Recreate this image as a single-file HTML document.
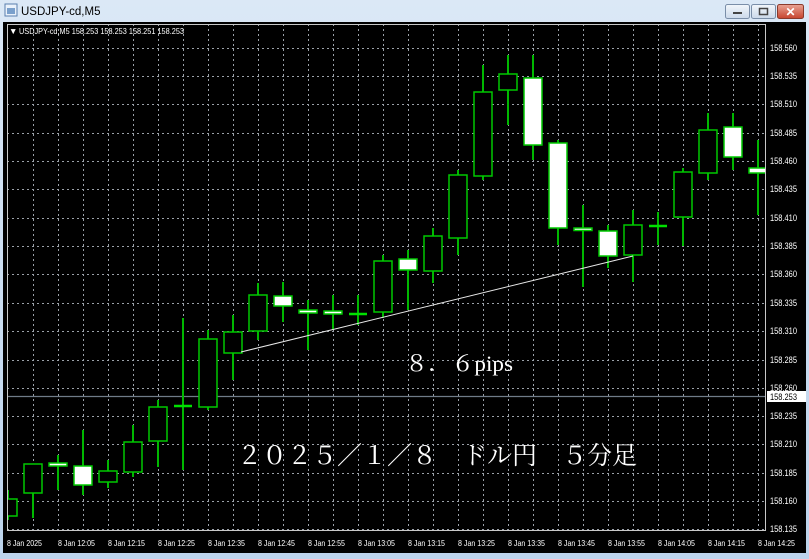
<!DOCTYPE html>
<html><head><meta charset="utf-8"><style>
html,body{margin:0;padding:0;width:809px;height:559px;overflow:hidden;background:#c4d8ee;}
svg{display:block}
</style></head><body>
<svg width="809" height="559" xmlns="http://www.w3.org/2000/svg" font-family="Liberation Sans, sans-serif">
<defs>
<linearGradient id="tb" x1="0" y1="0" x2="0" y2="1"><stop offset="0" stop-color="#dbe8f6"/><stop offset="1" stop-color="#bcd3ec"/></linearGradient>
<linearGradient id="cl" x1="0" y1="0" x2="0" y2="1"><stop offset="0" stop-color="#e9a394"/><stop offset="1" stop-color="#c7442e"/></linearGradient>
<linearGradient id="bt" x1="0" y1="0" x2="0" y2="1"><stop offset="0" stop-color="#f2f6fb"/><stop offset="1" stop-color="#cbd9ea"/></linearGradient>
<clipPath id="pc"><rect x="7" y="24" width="759" height="507"/></clipPath>
</defs>
<rect x="0" y="0" width="809" height="559" fill="url(#tb)"/>
<rect x="5" y="4" width="12" height="12" fill="#eaf2fb" stroke="#5a7fae"/>
<rect x="7" y="8" width="8" height="6" fill="#7aa0cc"/>
<text x="21" y="15" font-size="11.5" fill="#000">USDJPY-cd,M5</text>
<rect x="725.5" y="4.5" width="24" height="14" rx="2" fill="url(#bt)" stroke="#7a8ea8"/>
<rect x="733" y="12" width="9" height="2" fill="#444"/>
<rect x="751.5" y="4.5" width="24" height="14" rx="2" fill="url(#bt)" stroke="#7a8ea8"/>
<rect x="759.5" y="8.5" width="8" height="6" fill="none" stroke="#444" stroke-width="1.5"/>
<rect x="777.5" y="4.5" width="26" height="14" rx="2" fill="url(#cl)" stroke="#8a3a2c"/>
<text x="790.5" y="16" font-size="12" font-weight="bold" fill="#fff" text-anchor="middle">✕</text>
<rect x="3" y="22" width="803" height="531" fill="#000"/>
<g clip-path="url(#pc)">
<g stroke="#9aa0a8" stroke-width="1" stroke-dasharray="2,3">
<path d="M33.5 24V531M58.5 24V531M83.5 24V531M108.5 24V531M133.5 24V531M158.5 24V531M183.5 24V531M208.5 24V531M233.5 24V531M258.5 24V531M283.5 24V531M308.5 24V531M333.5 24V531M358.5 24V531M383.5 24V531M408.5 24V531M433.5 24V531M458.5 24V531M483.5 24V531M508.5 24V531M533.5 24V531M558.5 24V531M583.5 24V531M608.5 24V531M633.5 24V531M658.5 24V531M683.5 24V531M708.5 24V531M733.5 24V531M758.5 24V531"/>
<path d="M7 48.5H766M7 76.5H766M7 104.5H766M7 133.5H766M7 161.5H766M7 189.5H766M7 218.5H766M7 246.5H766M7 274.5H766M7 303.5H766M7 331.5H766M7 360.5H766M7 388.5H766M7 416.5H766M7 444.5H766M7 473.5H766M7 501.5H766M7 529.5H766"/>
</g>
<line x1="7" y1="396.5" x2="766" y2="396.5" stroke="#6f7b88" stroke-width="1.3"/>
<g stroke="#00b800" stroke-width="2">
<path d="M8 490V520M33 464V518M58 455V490M83 430V495M108 460V488M133 425V477M158 400V467M183 318V470M208 330V410M233 315V380M258 283V340M283 282V322M308 300V350M333 295V330M358 295V325M383 255V318M408 250V310M433 228V283M458 170V255M483 65V180M508 55V125M533 55V160M558 140V245M583 205V287M608 225V268M633 210V282M658 212V245M683 168V246M708 113V180M733 113V170M758 140V215"/>
</g>
<g stroke="#00c800" stroke-width="1.5" fill="#000">
<rect x="-1" y="499" width="18" height="17"/>
<rect x="24" y="464" width="18" height="29"/>
<rect x="99" y="471" width="18" height="11"/>
<rect x="124" y="442" width="18" height="30"/>
<rect x="149" y="407" width="18" height="34"/>
<rect x="199" y="339" width="18" height="68"/>
<rect x="224" y="332" width="18" height="21"/>
<rect x="249" y="295" width="18" height="36"/>
<rect x="374" y="261" width="18" height="51"/>
<rect x="424" y="236" width="18" height="35"/>
<rect x="449" y="175" width="18" height="63"/>
<rect x="474" y="92" width="18" height="84"/>
<rect x="499" y="74" width="18" height="16"/>
<rect x="624" y="225" width="18" height="30"/>
<rect x="674" y="172" width="18" height="45"/>
<rect x="699" y="130" width="18" height="43"/>
</g>
<g stroke="#00c800" stroke-width="1.5" fill="#fff">
<rect x="49" y="463" width="18" height="3"/>
<rect x="74" y="466" width="18" height="19"/>
<rect x="274" y="296" width="18" height="10"/>
<rect x="299" y="310" width="18" height="3"/>
<rect x="324" y="311" width="18" height="3"/>
<rect x="399" y="259" width="18" height="11"/>
<rect x="524" y="78" width="18" height="67"/>
<rect x="549" y="143" width="18" height="85"/>
<rect x="574" y="228" width="18" height="2.5"/>
<rect x="599" y="231" width="18" height="25"/>
<rect x="724" y="127" width="18" height="30"/>
<rect x="749" y="168" width="18" height="5"/>
</g>
<g stroke="#00e000" stroke-width="2.5">
<path d="M174 406H192M349 314H367M649 226H667"/>
</g>
<line x1="241" y1="352" x2="633" y2="256" stroke="#e8e8e8" stroke-width="1"/>
<text x="405" y="371" font-size="22" fill="#fff" font-family="Liberation Serif, Noto Serif CJK SC, serif" textLength="108" lengthAdjust="spacingAndGlyphs">８．６pips</text>
<text x="237" y="464" font-size="25" fill="#fff" font-family="Liberation Serif, Noto Serif CJK JP, Noto Serif CJK SC, serif">２０２５／１／８　ドル円　５分足</text>
</g>
<rect x="7.5" y="24.5" width="758" height="506" fill="none" stroke="#c8c8c8" stroke-width="1"/>
<g font-size="9" fill="#fff">
<text x="770" y="51" textLength="27" lengthAdjust="spacingAndGlyphs">158.560</text><text x="770" y="79" textLength="27" lengthAdjust="spacingAndGlyphs">158.535</text><text x="770" y="107" textLength="27" lengthAdjust="spacingAndGlyphs">158.510</text>
<text x="770" y="136" textLength="27" lengthAdjust="spacingAndGlyphs">158.485</text><text x="770" y="164" textLength="27" lengthAdjust="spacingAndGlyphs">158.460</text><text x="770" y="192" textLength="27" lengthAdjust="spacingAndGlyphs">158.435</text>
<text x="770" y="221" textLength="27" lengthAdjust="spacingAndGlyphs">158.410</text><text x="770" y="249" textLength="27" lengthAdjust="spacingAndGlyphs">158.385</text><text x="770" y="277" textLength="27" lengthAdjust="spacingAndGlyphs">158.360</text>
<text x="770" y="306" textLength="27" lengthAdjust="spacingAndGlyphs">158.335</text><text x="770" y="334" textLength="27" lengthAdjust="spacingAndGlyphs">158.310</text><text x="770" y="363" textLength="27" lengthAdjust="spacingAndGlyphs">158.285</text>
<text x="770" y="391" textLength="27" lengthAdjust="spacingAndGlyphs">158.260</text><text x="770" y="419" textLength="27" lengthAdjust="spacingAndGlyphs">158.235</text><text x="770" y="447" textLength="27" lengthAdjust="spacingAndGlyphs">158.210</text>
<text x="770" y="476" textLength="27" lengthAdjust="spacingAndGlyphs">158.185</text><text x="770" y="504" textLength="27" lengthAdjust="spacingAndGlyphs">158.160</text><text x="770" y="532" textLength="27" lengthAdjust="spacingAndGlyphs">158.135</text>
</g>
<rect x="767" y="391" width="39" height="11" fill="#fff"/>
<text x="770" y="400" font-size="9" fill="#000" textLength="27" lengthAdjust="spacingAndGlyphs">158.253</text>
<g font-size="8.5" fill="#fff">
<text x="7" y="546" textLength="35" lengthAdjust="spacingAndGlyphs">8 Jan 2025</text>
<text x="58" y="546" textLength="37" lengthAdjust="spacingAndGlyphs">8 Jan 12:05</text><text x="108" y="546" textLength="37" lengthAdjust="spacingAndGlyphs">8 Jan 12:15</text><text x="158" y="546" textLength="37" lengthAdjust="spacingAndGlyphs">8 Jan 12:25</text>
<text x="208" y="546" textLength="37" lengthAdjust="spacingAndGlyphs">8 Jan 12:35</text><text x="258" y="546" textLength="37" lengthAdjust="spacingAndGlyphs">8 Jan 12:45</text><text x="308" y="546" textLength="37" lengthAdjust="spacingAndGlyphs">8 Jan 12:55</text>
<text x="358" y="546" textLength="37" lengthAdjust="spacingAndGlyphs">8 Jan 13:05</text><text x="408" y="546" textLength="37" lengthAdjust="spacingAndGlyphs">8 Jan 13:15</text><text x="458" y="546" textLength="37" lengthAdjust="spacingAndGlyphs">8 Jan 13:25</text>
<text x="508" y="546" textLength="37" lengthAdjust="spacingAndGlyphs">8 Jan 13:35</text><text x="558" y="546" textLength="37" lengthAdjust="spacingAndGlyphs">8 Jan 13:45</text><text x="608" y="546" textLength="37" lengthAdjust="spacingAndGlyphs">8 Jan 13:55</text>
<text x="658" y="546" textLength="37" lengthAdjust="spacingAndGlyphs">8 Jan 14:05</text><text x="708" y="546" textLength="37" lengthAdjust="spacingAndGlyphs">8 Jan 14:15</text><text x="758" y="546" textLength="37" lengthAdjust="spacingAndGlyphs">8 Jan 14:25</text>
</g>
<g font-size="8.5" fill="#fff">
<text x="9" y="34">▼</text>
<text x="19" y="34" textLength="165" lengthAdjust="spacingAndGlyphs">USDJPY-cd,M5  158.253 158.253 158.251 158.253</text>
</g>
</svg>
</body></html>
